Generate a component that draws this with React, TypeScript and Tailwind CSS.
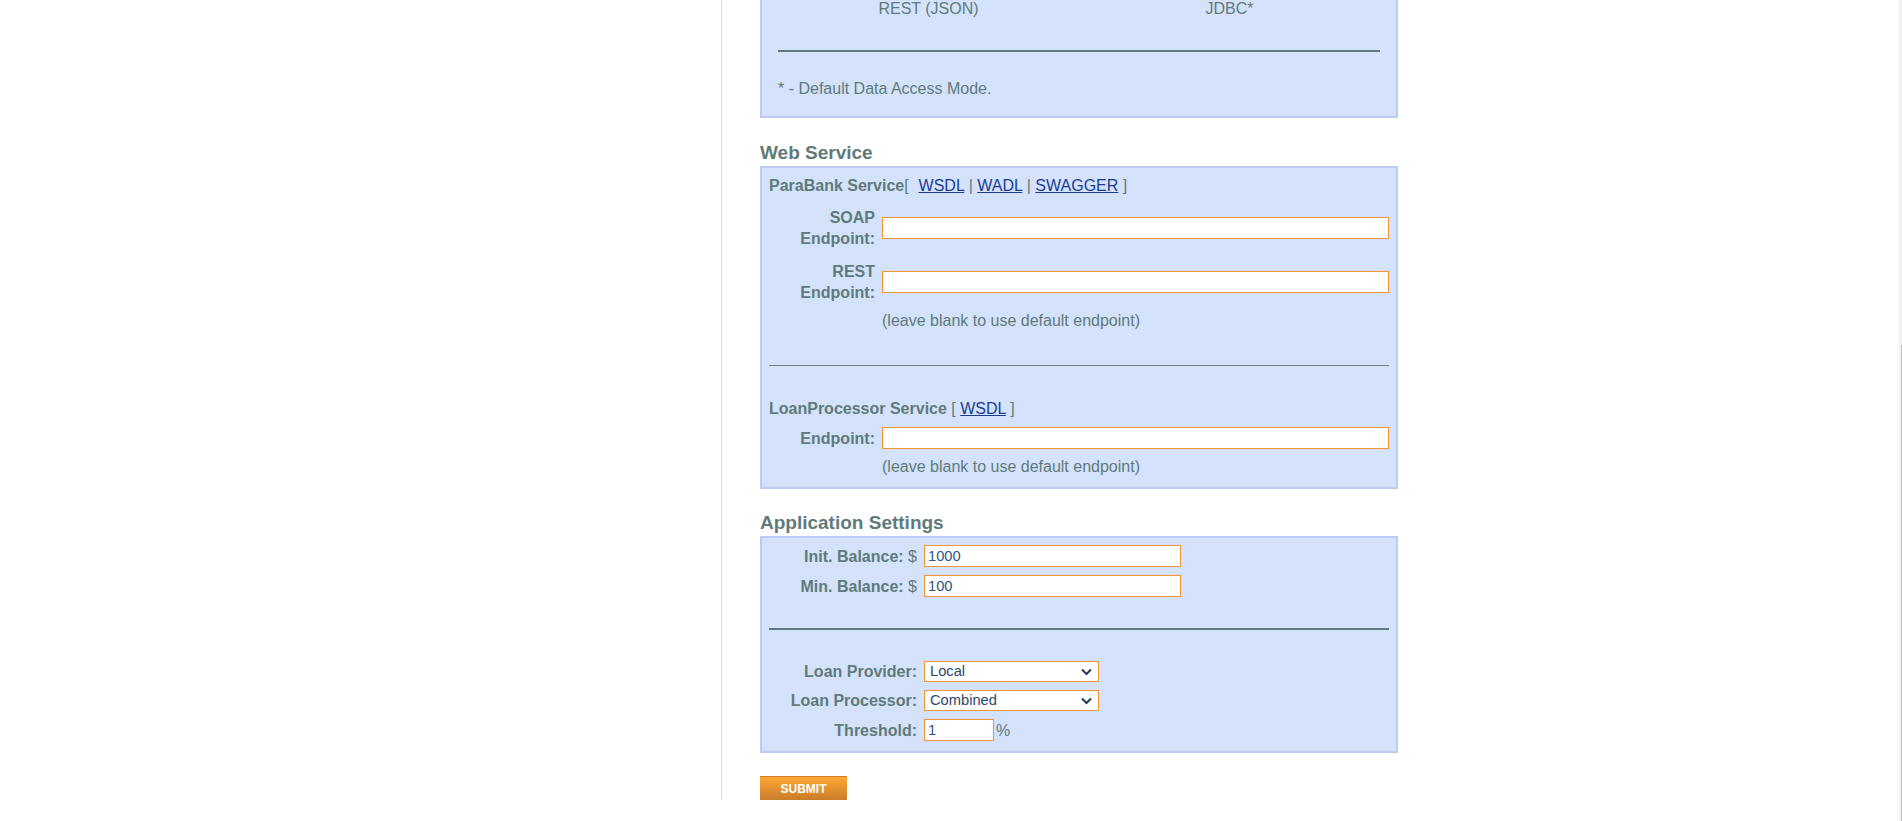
import { ReactNode } from "react";

function Chevron() {
  return (
    <svg className="pointer-events-none absolute right-[7px] top-1/2 h-[7px] w-[11px] -translate-y-1/2" viewBox="0 0 11 7" fill="none" aria-hidden>
      <path d="M1 1l4.5 4.5L10 1" stroke="#1f3a5c" strokeWidth="2" />
    </svg>
  );
}

function TextInput({ value, className }: { value?: string; className?: string }) {
  return (
    <input
      defaultValue={value}
      className={`block h-[22px] border border-[#f0952f] bg-white px-[3px] text-[14.7px] text-[#33557f] outline-none ${className ?? ""}`}
    />
  );
}

function Dropdown({ value }: { value: string }) {
  return (
    <div className="relative h-[21px] w-[175px]">
      <select
        defaultValue={value}
        className="block h-[21px] w-full appearance-none border border-[#f0952f] bg-white pl-[5px] text-[14.7px] leading-[19px] text-[#2d4a6a] outline-none"
      >
        <option>{value}</option>
      </select>
      <Chevron />
    </div>
  );
}

function Row({ label, children, width, className }: { label: ReactNode; children: ReactNode; width: string; className?: string }) {
  return (
    <div className={`flex items-center gap-[7px] ${className ?? ""}`}>
      <div className={`${width} shrink-0 text-right font-bold leading-[21px]`}>{label}</div>
      {children}
    </div>
  );
}

function Link({ children }: { children: ReactNode }) {
  return <a className="font-normal text-[#1b3b8f] underline">{children}</a>;
}

export default function App() {
  return (
    <div className="relative min-h-[821px] overflow-hidden bg-white font-['Liberation_Sans',Arial,sans-serif] text-[16px] text-[#5f7b79]">
      <div className="flex">
        <div className="w-[721px] shrink-0" />
        <div className="border-l border-[#cfe5e2] pl-[38px]">
          <div className="w-[638px]">
            {/* data access mode (scrolled) */}
            <div className="border-x-2 border-b-2 border-[#bccbf6] bg-[#d4e2fc] px-[16px] pb-[18px]">
              <div className="grid grid-cols-2 text-center leading-[18px]">
                <span>REST (JSON)</span>
                <span>JDBC*</span>
              </div>
              <div className="mt-[32px] h-[2px] bg-[#5f7b79]" />
              <p className="mt-[28px] leading-[18px]">* - Default Data Access Mode.</p>
            </div>

            <h2 className="mb-[2px] mt-[24px] text-[19px] font-bold leading-[22px]">Web Service</h2>
            <div className="border-2 border-[#bccbf6] bg-[#d4e2fc] px-[7px] pb-[10px] pt-[9px]">
              <div className="whitespace-pre leading-[18px]">
                <b>ParaBank Service</b>[  <span className="ml-[1px]" /><Link>WSDL</Link> | <Link>WADL</Link> | <Link>SWAGGER</Link> ]
              </div>
              <Row className="mt-[12px]" width="w-[106px]" label={<>SOAP<br />Endpoint:</>}>
                <TextInput className="flex-1" />
              </Row>
              <Row className="mt-[12px]" width="w-[106px]" label={<>REST<br />Endpoint:</>}>
                <TextInput className="flex-1" />
              </Row>
              <p className="mt-[7px] pl-[113px] leading-[21px]">(leave blank to use default endpoint)</p>
              <div className="mt-[34px] h-px bg-[#6c8482]" />
              <div className="mt-[32px] leading-[21px]">
                <b>LoanProcessor Service</b> [ <Link>WSDL</Link> ]
              </div>
              <Row className="mt-[8px]" width="w-[106px]" label="Endpoint:">
                <TextInput className="flex-1" />
              </Row>
              <p className="mt-[7px] pl-[113px] leading-[21px]">(leave blank to use default endpoint)</p>
            </div>

            <h2 className="mb-[2px] mt-[23px] text-[19px] font-bold leading-[22px]">Application Settings</h2>
            <div className="border-2 border-[#bccbf6] bg-[#d4e2fc] px-[7px] pb-[10px] pt-[7px]">
              <Row width="w-[148px]" label={<>Init. Balance: <span className="font-normal">$</span></>}>
                <TextInput value="1000" className="w-[257px]" />
              </Row>
              <Row className="mt-[8px]" width="w-[148px]" label={<>Min. Balance: <span className="font-normal">$</span></>}>
                <TextInput value="100" className="w-[257px]" />
              </Row>
              <div className="mt-[31px] h-[2px] bg-[#5f7b79]" />
              <Row className="mt-[31px]" width="w-[148px]" label="Loan Provider:">
                <Dropdown value="Local" />
              </Row>
              <Row className="mt-[8px]" width="w-[148px]" label="Loan Processor:">
                <Dropdown value="Combined" />
              </Row>
              <Row className="mt-[8px]" width="w-[148px]" label="Threshold:">
                <div className="flex items-center gap-[2px]">
                  <TextInput value="1" className="w-[70px]" />
                  <span className="leading-[21px]">%</span>
                </div>
              </Row>
            </div>

            <button className="mt-[23px] block h-[24px] w-[87px] border-t border-[#cd7c24] bg-linear-to-b from-[#fea736] to-[#c97d2a] text-[12px] font-bold leading-[22px] text-white">
              SUBMIT
            </button>
          </div>
        </div>
      </div>

      {/* thin scrollbar at the window edge */}
      <div className="pointer-events-none fixed right-0 top-0 flex h-[821px] w-[3px] flex-col">
        <div className="h-[345px] bg-[#f0f0f0]" />
        <div className="flex flex-1">
          <div className="w-[2px] bg-[#f4f4f4]" />
          <div className="w-px bg-[#c2c2c2]" />
        </div>
      </div>
    </div>
  );
}
